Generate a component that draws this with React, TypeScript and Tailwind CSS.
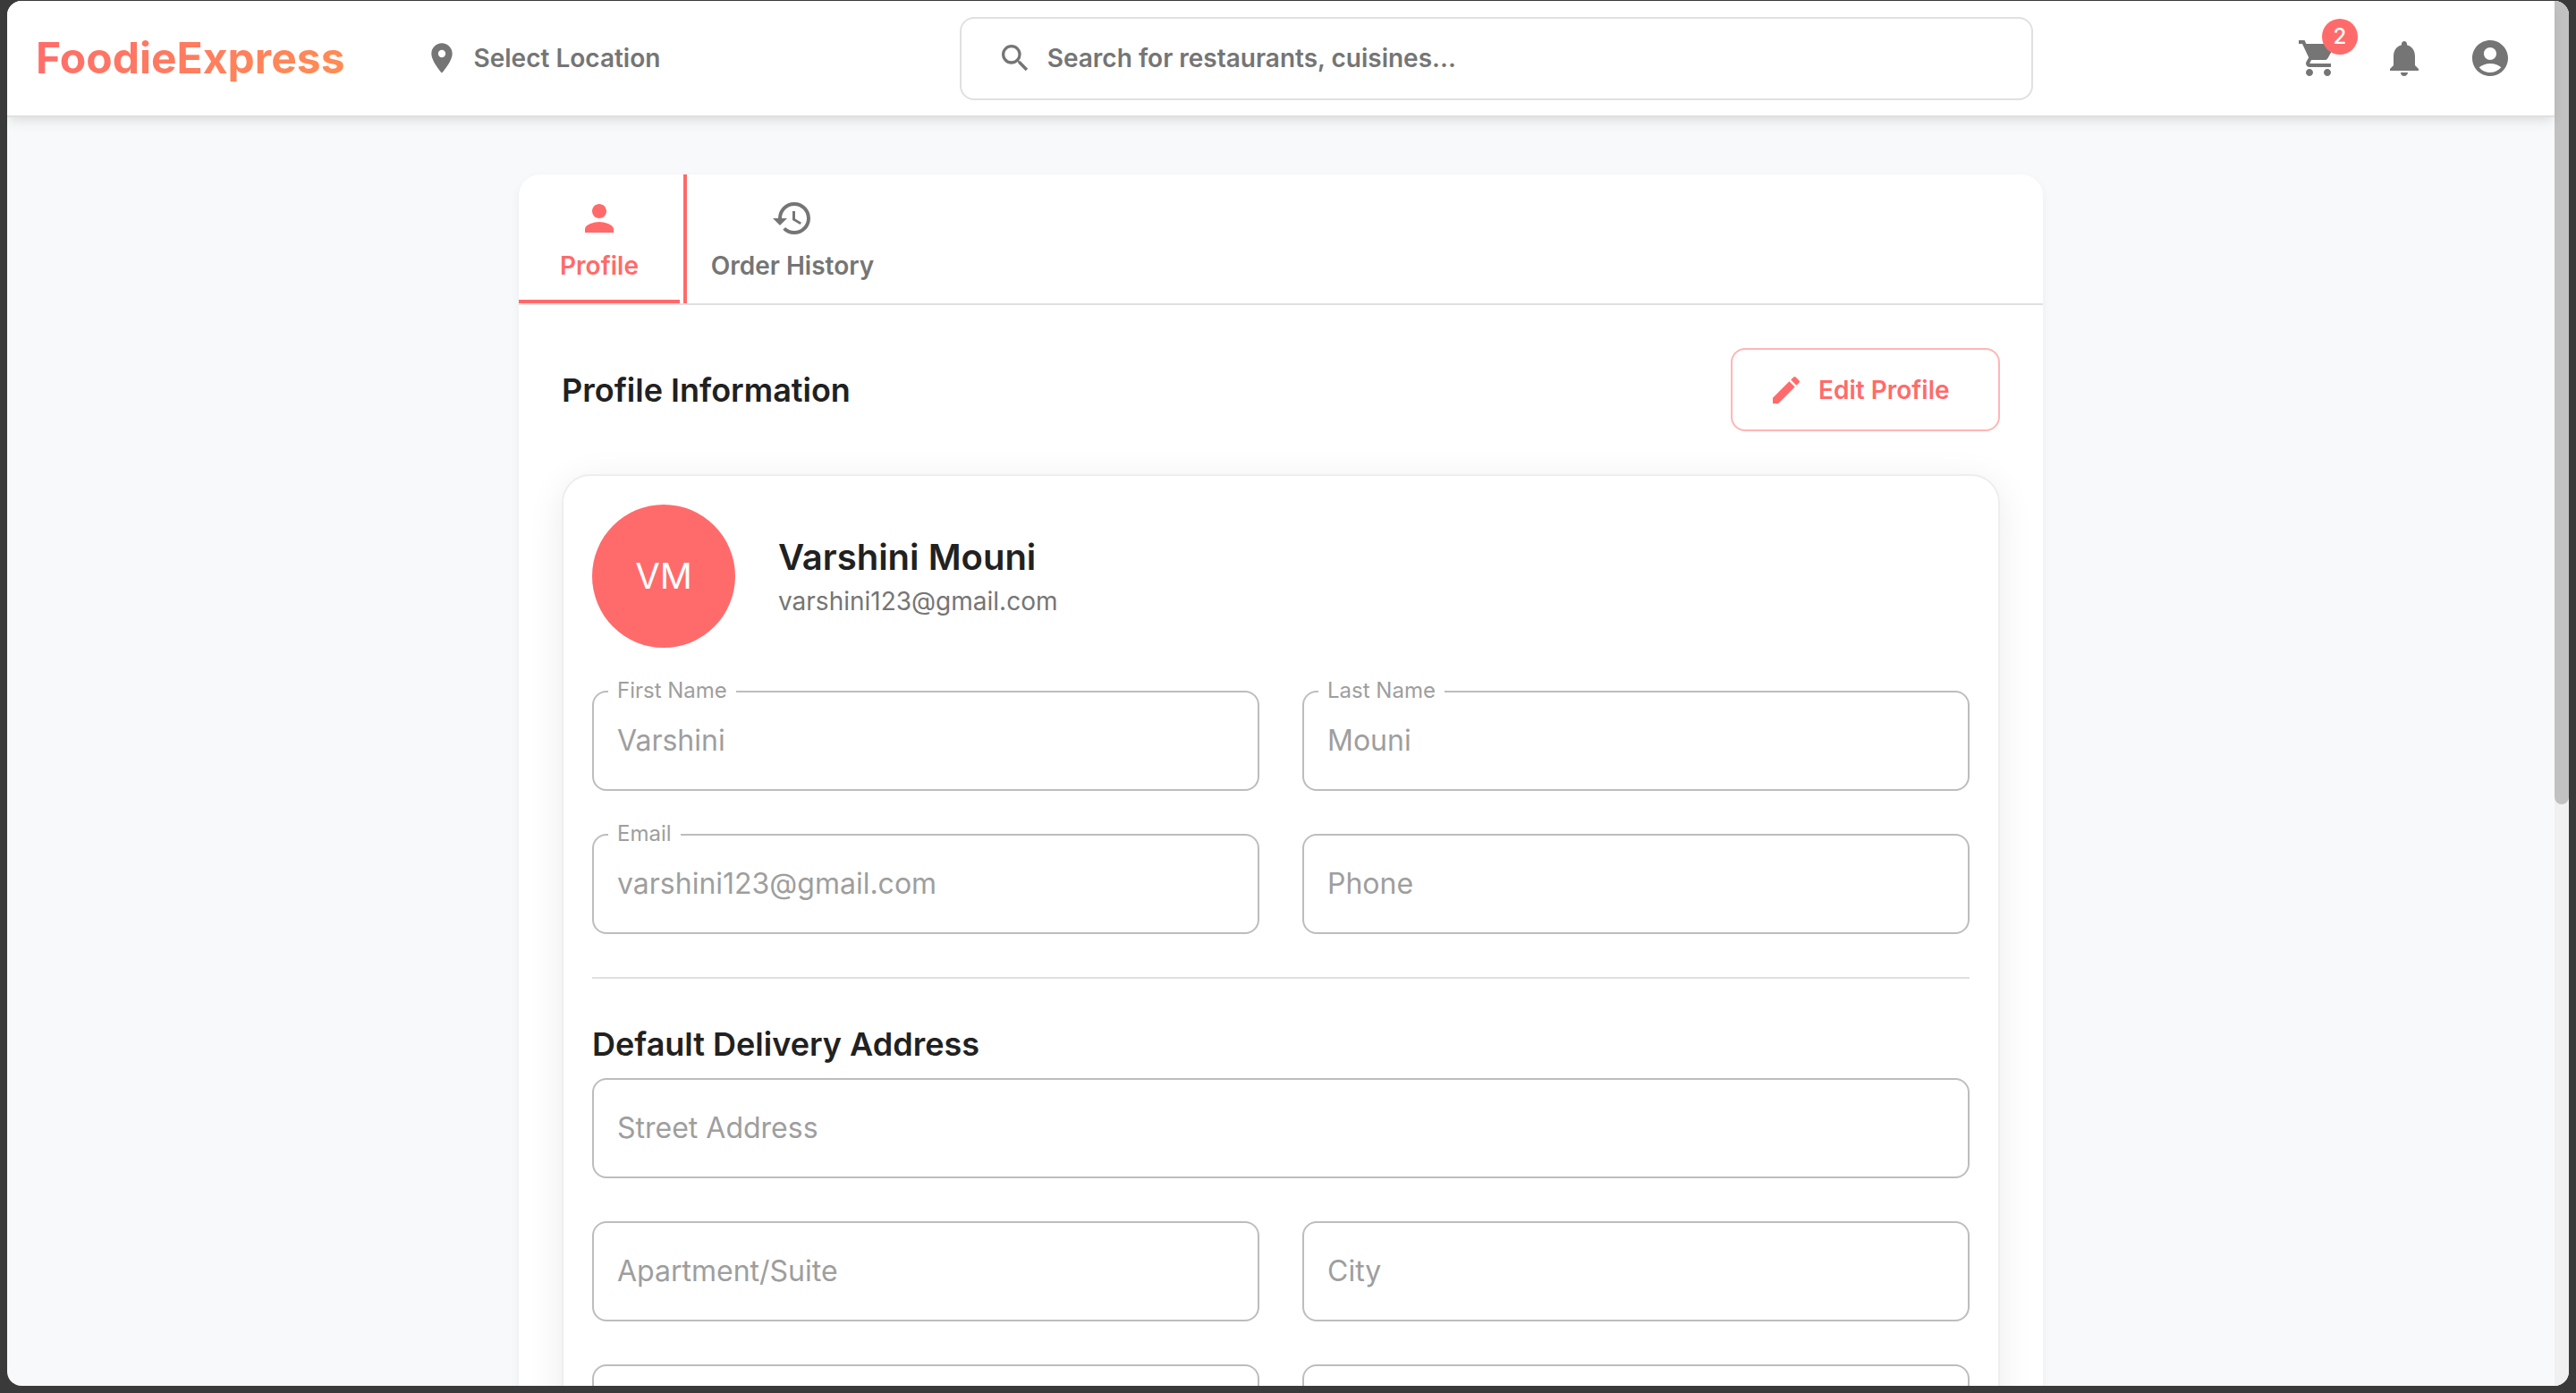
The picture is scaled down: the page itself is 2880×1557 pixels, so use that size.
import React from "react";
import {
  MdEdit,
  MdHistory,
  MdLocationOn,
  MdNotifications,
  MdPerson,
  MdSearch,
  MdShoppingCart,
} from "react-icons/md";

type FieldProps = {
  id: string;
  label: string;
  value?: string;
  type?: string;
  wide?: boolean;
};

function Field({ id, label, value, type = "text", wide = false }: FieldProps) {
  const filled = Boolean(value);
  return (
    <div className={wide ? "relative col-span-2" : "relative"}>
      {filled && (
        <label
          htmlFor={id}
          className="absolute -top-3 left-[18px] bg-white px-2.5 text-2xl leading-6 text-[#9e9e9e]"
        >
          {label}
        </label>
      )}
      <input
        id={id}
        type={type}
        defaultValue={value}
        placeholder={filled ? undefined : label}
        aria-label={filled ? undefined : label}
        readOnly
        className="block h-28 w-full rounded-2xl border-2 border-[#bdbdbd] bg-transparent px-[26px] pb-0.5 text-[32px] text-[#9e9e9e] outline-none placeholder:text-[#9e9e9e]"
      />
    </div>
  );
}

function AccountIcon() {
  return (
    <svg viewBox="0 0 24 24" fill="currentColor" className="size-12">
      <path d="M12 2C6.48 2 2 6.48 2 12s4.48 10 10 10 10-4.48 10-10S17.52 2 12 2m0 4c1.93 0 3.5 1.57 3.5 3.5S13.93 13 12 13s-3.5-1.57-3.5-3.5S10.07 6 12 6m0 14c-2.03 0-4.43-.82-6.14-2.88C7.55 15.8 9.68 15 12 15s4.45.8 6.14 2.12C16.43 19.18 14.03 20 12 20" />
    </svg>
  );
}

function Header() {
  return (
    <header className="relative z-10 flex h-[130px] shrink-0 items-center border-b-2 border-[#e0e0e0] bg-white px-8 text-[#757575] shadow-[0_8px_12px_-2px_rgba(0,0,0,0.08),0_4px_8px_-2px_rgba(0,0,0,0.03)]">
      <a
        href="#home"
        className="shrink-0 bg-linear-[135deg] from-[#ff6b6b] to-[#ff8e53] bg-clip-text text-5xl font-bold leading-[64px] text-transparent"
      >
        FoodieExpress
      </a>
      <button
        type="button"
        className="ml-12 flex h-20 min-w-[360px] shrink-0 items-center gap-4 whitespace-nowrap pl-10 text-[28px] font-semibold"
      >
        <MdLocationOn className="size-10" />
        Select Location
      </button>
      <div className="flex flex-1 justify-center">
        <label className="flex h-[93px] w-full max-w-[1200px] items-center gap-4 rounded-2xl border-2 border-[#e0e0e0] pl-10 pr-12">
          <MdSearch className="size-10 shrink-0" />
          <input
            type="text"
            aria-label="Search for restaurants, cuisines"
            placeholder="Search for restaurants, cuisines..."
            className="min-w-0 flex-1 bg-transparent text-[28px] font-semibold outline-none placeholder:text-[#757575]"
          />
        </label>
      </div>
      <nav className="flex shrink-0 gap-4">
        <button type="button" aria-label="Cart" className="relative p-4">
          <MdShoppingCart className="size-12" />
          <span className="absolute -right-1 -top-1 flex size-10 items-center justify-center rounded-full bg-[#ff6b6b] text-2xl font-medium text-white">
            2
          </span>
        </button>
        <button type="button" aria-label="Notifications" className="p-4">
          <MdNotifications className="size-12" />
        </button>
        <button type="button" aria-label="Account" className="p-4">
          <AccountIcon />
        </button>
      </nav>
    </header>
  );
}

function Tabs() {
  return (
    <div role="tablist" className="flex border-b-2 border-[#e0e0e0]">
      <button
        type="button"
        role="tab"
        aria-selected="true"
        className="relative flex h-36 w-[180px] flex-col items-center justify-center gap-3 text-[28px] font-semibold leading-[35px] text-[#ff6b6b]"
      >
        <MdPerson className="size-12" />
        Profile
        <span className="absolute inset-x-0 bottom-0 h-1 bg-[#ff6b6b]" />
        <span className="absolute inset-y-0 -right-2 w-1 bg-[#ff6b6b]" />
      </button>
      <button
        type="button"
        role="tab"
        aria-selected="false"
        className="flex h-36 w-[252px] flex-col items-center justify-center gap-3 text-[28px] font-semibold leading-[35px] text-[#757575]"
      >
        <MdHistory className="size-12" />
        Order History
      </button>
    </div>
  );
}

function ProfileCard() {
  return (
    <section className="rounded-[32px] border-2 border-[#eeeeee] bg-white p-8 shadow-[0_8px_40px_rgba(0,0,0,0.08)]">
      <div className="mb-12 flex items-center gap-12">
        <div className="flex size-40 items-center justify-center rounded-full bg-[#ff6b6b] text-[40px] text-white">
          VM
        </div>
        <div>
          <h2 className="text-[40px] font-semibold leading-[56px] text-[#212121]">Varshini Mouni</h2>
          <p className="text-[28px] leading-[42px] text-[#757575]">varshini123@gmail.com</p>
        </div>
      </div>
      <div className="grid grid-cols-2 gap-12">
        <Field id="first-name" label="First Name" value="Varshini" />
        <Field id="last-name" label="Last Name" value="Mouni" />
        <Field id="email" label="Email" value="varshini123@gmail.com" type="email" />
        <Field id="phone" label="Phone" type="tel" />
      </div>
      <hr className="my-12 border-t-2 border-[#e0e0e0]" />
      <h2 className="mb-[13px] text-4xl font-semibold leading-[50px] text-[#212121]">
        Default Delivery Address
      </h2>
      <div className="grid grid-cols-2 gap-12">
        <Field id="street" label="Street Address" wide />
        <Field id="apartment" label="Apartment/Suite" />
        <Field id="city" label="City" />
        <Field id="state" label="State" />
        <Field id="zip" label="ZIP Code" />
      </div>
    </section>
  );
}

export default function App() {
  return (
    <div className="h-screen bg-[#3a3a3a] px-2 pb-2 pt-px font-['Inter',sans-serif]">
      <div className="flex h-full overflow-hidden rounded-2xl bg-[#f8f9fb]">
        <div className="flex min-w-0 flex-1 flex-col">
          <Header />
          <main className="min-h-0 flex-1 overflow-hidden px-12 pt-16">
            <div className="mx-auto max-w-[1704px] overflow-hidden rounded-3xl bg-white shadow-[0_4px_12px_rgba(0,0,0,0.05)]">
              <Tabs />
              <div className="p-12">
                <div className="mb-12 flex items-center justify-between">
                  <h1 className="text-4xl font-semibold leading-[48px] text-[#212121]">
                    Profile Information
                  </h1>
                  <button
                    type="button"
                    className="flex h-[93px] min-w-[301px] items-center gap-4 rounded-2xl border-2 border-[#ffb5b5] pl-10 text-[28px] font-semibold text-[#ff6b6b]"
                  >
                    <MdEdit className="size-10" />
                    Edit Profile
                  </button>
                </div>
                <ProfileCard />
              </div>
            </div>
          </main>
        </div>
        <div className="w-4 shrink-0 bg-[#f0f0f0]">
          <div className="h-[58%] rounded-b-full bg-[#c1c1c1]" />
        </div>
      </div>
    </div>
  );
}
